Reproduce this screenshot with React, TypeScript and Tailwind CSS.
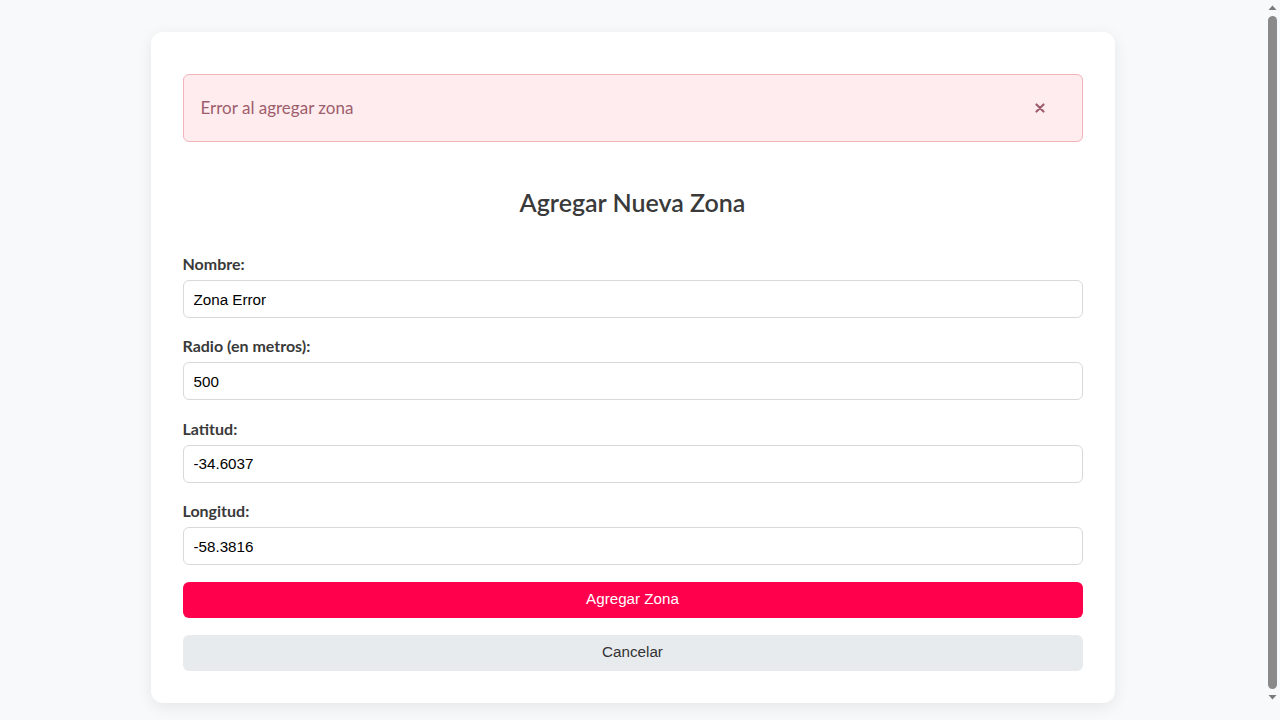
import React from 'react';

const fields = [
  { label: 'Nombre:', value: 'Zona Error' },
  { label: 'Radio (en metros):', value: '500' },
  { label: 'Latitud:', value: '-34.6037' },
  { label: 'Longitud:', value: '-58.3816' },
];

// Classic scrollbar strip as it appears at the right edge of the screenshot
const ScrollStrip = () => (
  <div className="flex h-screen w-[15px] shrink-0 flex-col items-center bg-[#f8f9fa]">
    <svg width="15" height="15" viewBox="0 0 15 15" className="shrink-0">
      <path d="M3.5 10 L7.5 5.5 L11.5 10 Z" fill="#7b7b7b" />
    </svg>
    <div className="my-[1px] w-[9px] flex-1 rounded-full bg-[#8a8a8a]" />
    <svg width="15" height="15" viewBox="0 0 15 15" className="shrink-0 mb-[1px]">
      <path d="M3.5 5 L7.5 9.5 L11.5 5 Z" fill="#7b7b7b" />
    </svg>
    <div className="h-[14px] shrink-0" />
  </div>
);

export default function App() {
  return (
    <div className="flex h-screen bg-[#f8f9fa] font-['Lato',sans-serif]">
      <div className="flex-1 overflow-y-auto">
        <div className="py-8">
          <div className="mx-auto w-[964px] rounded-xl bg-white p-8 shadow-[0_4px_16px_rgba(0,0,0,0.08)]">
            {/* Error alert */}
            <div className="mt-[10px] flex h-[68px] items-center justify-between rounded-md border border-[#f4b3bb] bg-[#feecee] pl-[17px] pr-[37px]">
              <span className="text-[17px] text-[#9e5d6c]">Error al agregar zona</span>
              <button type="button" aria-label="Cerrar" className="text-[#9e5d6c]">
                <svg width="10" height="10" viewBox="0 0 10 10" fill="none" stroke="currentColor" strokeWidth="2.2" strokeLinecap="round">
                  <path d="M1.5 1.5 L8.5 8.5 M8.5 1.5 L1.5 8.5" />
                </svg>
              </button>
            </div>

            <h2 className="mt-[44px] mb-[34px] text-center text-[25px] font-semibold leading-8 text-[#3a3a3a]">
              Agregar Nueva Zona
            </h2>

            <form className="flex flex-col">
              {fields.map((f) => (
                <div key={f.label} className="mb-[16.4px] flex flex-col">
                  <label className="mb-1 text-[16px] font-bold leading-6 text-[#3a3a3a]">{f.label}</label>
                  <input
                    defaultValue={f.value}
                    className="h-[38px] rounded-md border border-[#d9d9d9] bg-white px-[10px] font-['Liberation_Sans',Arial,sans-serif] text-[15.2px] text-black outline-none"
                  />
                </div>
              ))}
              <button
                type="button"
                className="h-[36px] rounded-md bg-[#ff004d] font-['Liberation_Sans',Arial,sans-serif] text-[15.2px] text-white"
              >
                Agregar Zona
              </button>
              <button
                type="button"
                className="mt-[17px] h-[36px] rounded-md bg-[#e8ebee] font-['Liberation_Sans',Arial,sans-serif] text-[15.2px] text-[#333]"
              >
                Cancelar
              </button>
            </form>
          </div>
        </div>
      </div>
      <ScrollStrip />
    </div>
  );
}
